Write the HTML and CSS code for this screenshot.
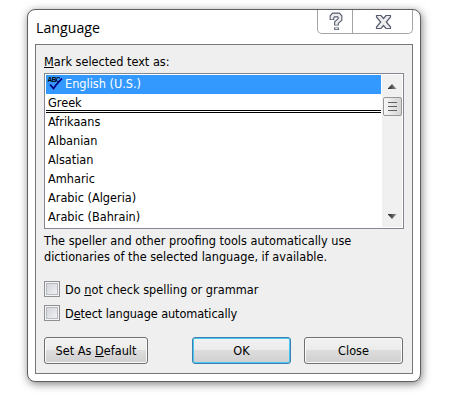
FILE: index.html
```html
<!DOCTYPE html>
<html lang="en">
	<head>
		<meta charset="UTF-8" />
		<meta name="viewport" content="width=device-width, initial-scale=1.0" />
		<title>Language</title>
		<link rel="stylesheet" href="styles.css">
	</head>
	<body>
		<div class="dialog">
			<div class="titlebar">
				<h1>Language</h1>
				<div class="window-buttons">
					<div class="help">
						<svg width="14" height="20" viewBox="0 0 14 20">
							<path class="edge" d="M3 8V4.500L4.500 3H9.500L11 4.500V7.500L7.500 10.500V13.500M7.500 15.500V18" />
							<path class="fill" d="M3 7.200V4.500L4.500 3H9.500L11 4.500V7.500L7.500 10.500V12.700M7.500 16V17.200" />
						</svg>
					</div>
					<div class="close">
						<svg width="17" height="16" viewBox="0 0 17 16">
							<path class="edge" d="M1.500 1.500H6L8.500 4.500L11 1.500H15.500V3L11.300 8L15.500 13V14.500H11L8.500 11.500L6 14.500H1.500V13L5.700 8L1.500 3Z" />
						</svg>
					</div>
				</div>
			</div>
			<div class="content">
				<p class="label"><u>M</u>ark selected text as:</p>
				<div class="listbox">
					<ul>
						<li class="selected">
							<svg width="16" height="17" viewBox="0 0 16 17">
								<text class="abc" x="0.500" y="6.500" textLength="13">ABC</text>
								<path class="tick" d="M3 9.500L6.500 13.500L9 10L15 3.500" />
							</svg>
							English (U.S.)
						</li>
						<li class="recent">Greek</li>
						<li>Afrikaans</li>
						<li>Albanian</li>
						<li>Alsatian</li>
						<li>Amharic</li>
						<li>Arabic (Algeria)</li>
						<li>Arabic (Bahrain)</li>
					</ul>
					<div class="scrollbar">
						<span class="arrow up"></span>
						<span class="thumb"><i></i><i></i><i></i></span>
						<span class="arrow down"></span>
					</div>
				</div>
				<p class="note">The speller and other proofing tools automatically use<br />dictionaries of the selected language, if available.</p>
				<div class="option"><span class="checkbox"></span><span>Do <u>n</u>ot check spelling or grammar</span></div>
				<div class="option detect"><span class="checkbox"></span><span>D<u>e</u>tect language automatically</span></div>
				<div class="buttons">
					<button class="default">Set As <u>D</u>efault</button>
					<button class="ok">OK</button>
					<button class="cancel">Close</button>
				</div>
			</div>
		</div>
	</body>
</html>
```
FILE: styles.css
```css
* {
	box-sizing: border-box;
}
body {
	min-height: 414px;
	margin: 0;
	padding: 9px 0 0 27px;
	background-color: white;
	font-family: "DejaVu Sans Condensed", "DejaVu Sans", sans-serif;
	font-stretch: condensed;
	font-size: 12.6px;
	color: black;
}
u {
	text-underline-offset: 1px;
	text-decoration-skip-ink: none;
}
.dialog {
	width: 394px;
	height: 373px;
	padding: 0 7px 7px;
	border: 1px solid #606060;
	border-radius: 8px;
	background-color: white;
	box-shadow: 1px 2px 9px rgba(0, 0, 0, 0.5);
}
.titlebar {
	display: flex;
	justify-content: space-between;
	height: 34px;
}
h1 {
	margin: 7px 0 0 1px;
	font-family: "Open Sans", sans-serif;
	font-stretch: normal;
	font-size: 14.2px;
	font-weight: normal;
	line-height: 22px;
}
.window-buttons {
	display: flex;
	width: 96px;
	height: 24px;
	border: 1px solid #a5a5a5;
	border-top: none;
	border-radius: 0 0 5px 5px;
}
.window-buttons div {
	display: flex;
	align-items: center;
	justify-content: center;
}
.help {
	width: 35px;
	padding-left: 2px;
	border-right: 1px solid #a5a5a5;
}
.close {
	flex: 1;
	padding-left: 1px;
}
.edge {
	fill: #eeeeee;
	stroke: #555b70;
	stroke-width: 1.2;
}
.help .edge {
	fill: none;
	stroke-width: 4.8;
}
.help .fill {
	fill: none;
	stroke: #eeeeee;
	stroke-width: 2.6;
}
.content {
	height: 330px;
	padding: 8px;
	border: 1px solid #777777;
	background-color: #efefef;
}
p {
	margin: 0;
}
.label {
	height: 20px;
	line-height: 18px;
}
.listbox {
	display: flex;
	width: 360px;
	height: 156px;
	padding: 1px;
	border: 1px solid #828790;
	background-color: white;
}
ul {
	width: 335px;
	margin: 0;
	padding: 0;
	list-style: none;
}
li {
	height: 19px;
	padding-left: 2px;
	line-height: 18px;
}
.selected {
	display: flex;
	gap: 2px;
	padding-left: 1px;
	background-color: #3399ff;
	color: white;
}
.abc {
	fill: black;
	font-family: "Liberation Sans", sans-serif;
	font-size: 6.5px;
	font-weight: bold;
}
.tick {
	fill: none;
	stroke: #000080;
	stroke-width: 1.8;
}
.recent {
	border-bottom: 3px double black;
}
.scrollbar {
	display: flex;
	flex-direction: column;
	align-items: center;
	width: 20px;
	margin-left: 1px;
	padding: 9px 0 8px;
	background-color: #f0f0f0;
}
.arrow {
	width: 9px;
	height: 5px;
	background: linear-gradient(90deg, #222222, #999999);
}
.up {
	clip-path: polygon(50% 0, 100% 100%, 0 100%);
}
.down {
	margin-top: auto;
	clip-path: polygon(0 0, 100% 0, 50% 100%);
}
.thumb {
	display: flex;
	flex-direction: column;
	align-items: center;
	justify-content: center;
	gap: 3px;
	width: 19px;
	height: 19px;
	margin-top: 8px;
	border: 1px solid #979797;
	border-radius: 2px;
	background: linear-gradient(90deg, #f6f6f6, #d4d4d4);
}
.thumb i {
	width: 9px;
	height: 1px;
	background-color: #606060;
}
.note {
	margin-top: 4px;
	line-height: 16px;
}
.option {
	display: flex;
	align-items: center;
	height: 16px;
	margin-top: 8px;
}
.note + .option {
	margin-top: 16px;
}
.detect {
	letter-spacing: -0.1px;
}
.checkbox {
	width: 16px;
	height: 16px;
	margin-right: 5px;
	border: 1px solid #8e8f8f;
	background: linear-gradient(135deg, #cbcfd5, #f6f6f6);
	box-shadow: inset 0 0 0 1px #f4f4f4, inset 0 0 0 2px #b8bcc2;
}
.buttons {
	display: flex;
	margin-top: 16px;
}
button {
	width: 99px;
	height: 27px;
	padding: 0;
	border: 1px solid #707070;
	border-radius: 3px;
	background: linear-gradient(#f2f2f2, #ebebeb 48%, #dddddd 50%, #cfcfcf);
	box-shadow: inset 0 0 0 1px #fafafa;
	font: inherit;
	color: black;
}
.default {
	width: 104px;
	margin-right: 44px;
}
.ok {
	margin-right: 13px;
	border-color: #3c7fb1;
	box-shadow: inset 0 0 0 1px #48c8f0;
}
```
